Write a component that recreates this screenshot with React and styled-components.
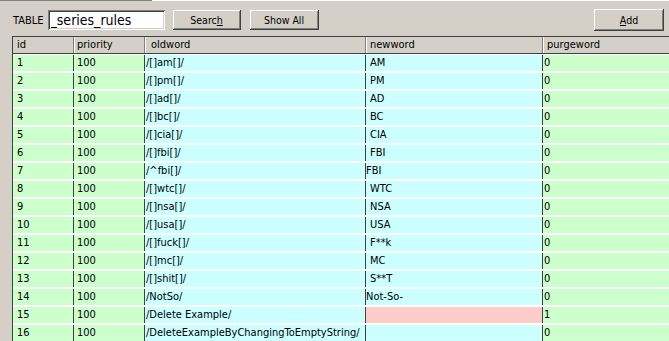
import React from 'react'
import styled, { createGlobalStyle } from 'styled-components'

const GlobalStyle = createGlobalStyle`
  html, body {
    margin: 0;
    padding: 0;
    background: #d4d0c8;
    overflow: hidden;
  }
`

const font = `"DejaVu Sans Condensed", "Liberation Sans", sans-serif`

const columns = [
  { key: 'id', title: 'id', width: '60px', pad: 4, headPad: 4, color: '#ccffcc' },
  { key: 'priority', title: 'priority', width: '71px', pad: 3, headPad: 3, color: '#ccffcc' },
  { key: 'oldword', title: 'oldword', width: '221px', pad: 1, headPad: 6, color: '#ccffff' },
  { key: 'newword', title: 'newword', width: '177px', pad: 4, headPad: 4, color: '#ccffff' },
  { key: 'purgeword', title: 'purgeword', width: '1fr', pad: 1, headPad: 4, color: '#ccffcc' }
]

const rows = [
  ['1', '/[]am[]/', 'AM', '0'],
  ['2', '/[]pm[]/', 'PM', '0'],
  ['3', '/[]ad[]/', 'AD', '0'],
  ['4', '/[]bc[]/', 'BC', '0'],
  ['5', '/[]cia[]/', 'CIA', '0'],
  ['6', '/[]fbi[]/', 'FBI', '0'],
  ['7', '/^fbi[]/', 'FBI', '0', true],
  ['8', '/[]wtc[]/', 'WTC', '0'],
  ['9', '/[]nsa[]/', 'NSA', '0'],
  ['10', '/[]usa[]/', 'USA', '0'],
  ['11', '/[]fuck[]/', 'F**k', '0'],
  ['12', '/[]mc[]/', 'MC', '0'],
  ['13', '/[]shit[]/', 'S**T', '0'],
  ['14', '/NotSo/', 'Not-So-', '0', true],
  ['15', '/Delete Example/', '', '1', false, true],
  ['16', '/DeleteExampleByChangingToEmptyString/', '', '0']
]

const gridTemplate = columns.map(c => c.width).join(' ')

const Page = styled.div`
  display: flex;
  flex-direction: column;
  height: 341px;
  background: #d4d0c8;
  font-family: ${font};
  color: #000;
  overflow: hidden;
`

const TabEdge = styled.div`
  display: flex;
  height: 2px;
`

const TabGap = styled.div`
  width: 152px;
  border-top: 1px solid #808080;
`

const TabLine = styled.div`
  flex: 1;
  border-top: 1px solid #ffffff;
`

const Toolbar = styled.div`
  display: flex;
  align-items: center;
  height: 22px;
  margin-top: 7px;
  padding: 0 5px 0 13px;
`

const Label = styled.span`
  font-size: 11px;
  margin-right: 4px;
`

const TableInput = styled.input`
  box-sizing: border-box;
  width: 117px;
  height: 20px;
  border: none;
  outline: none;
  padding: 0 3px;
  margin: 0 8px 0 0;
  background: #fff;
  font-family: ${font};
  font-size: 14px;
  color: #000;
  box-shadow: inset 1px 1px #808080, inset -1px -1px #ffffff,
    inset 2px 2px #404040, inset -2px -2px #d4d0c8;
`

const Button = styled.button`
  box-sizing: border-box;
  width: ${p => p.$width}px;
  height: ${p => p.$height || 20}px;
  margin-right: ${p => p.$gap || 0}px;
  margin-left: ${p => (p.$push ? 'auto' : '0')};
  padding: 0;
  border: none;
  background: #d4d0c8;
  font-family: ${font};
  font-size: 10.5px;
  color: #000;
  box-shadow: inset -1px -1px #404040, inset 1px 1px #ffffff,
    inset -2px -2px #808080, inset 2px 2px #d4d0c8;
`

const Grid = styled.div`
  flex: 1;
  margin: 5px 0 0 12px;
  border-left: 1px solid #404040;
  display: flex;
  flex-direction: column;
`

const HeaderRow = styled.div`
  display: grid;
  grid-template-columns: ${gridTemplate};
  height: 16px;
  border-top: 1px solid #404040;
  border-bottom: 1px solid #404040;
  background: #d4d0c8;
`

const HeaderCell = styled.div`
  padding-left: ${p => p.$pad}px;
  border-left: ${p => (p.$first ? 'none' : '1px solid #808080')};
  box-shadow: ${p => (p.$first ? 'none' : 'inset 1px 0 #ffffff')};
  font-size: 11px;
  line-height: 16px;
  white-space: nowrap;
  overflow: hidden;
`

const Body = styled.div`
  flex: 1;
  display: flex;
  flex-direction: column;
  gap: 2px;
  padding-top: 1px;
  background: #fff;
`

const Row = styled.div`
  display: grid;
  grid-template-columns: ${gridTemplate};
  height: 16px;
  flex-shrink: 0;
`

const Cell = styled.div`
  background: ${p => p.$bg};
  padding-left: ${p => p.$pad}px;
  border-left: ${p => (p.$first ? 'none' : '1px solid #404040')};
  font-size: 11px;
  line-height: 16px;
  white-space: nowrap;
  overflow: hidden;
`

const App = () => (
  <Page>
    <GlobalStyle />
    <TabEdge>
      <TabGap />
      <TabLine />
    </TabEdge>
    <Toolbar>
      <Label>TABLE</Label>
      <TableInput readOnly value='_series_rules' />
      <Button $width={68} $gap={9}>Searc<u>h</u></Button>
      <Button $width={69}>Show All</Button>
      <Button $width={70} $height={22} $push><u>A</u>dd</Button>
    </Toolbar>
    <Grid>
      <HeaderRow>
        {columns.map((c, i) => (
          <HeaderCell key={c.key} $pad={c.headPad} $first={i === 0}>{c.title}</HeaderCell>
        ))}
      </HeaderRow>
      <Body>
        {rows.map(([id, oldword, newword, purge, tight, missing]) => {
          const values = [id, '100', oldword, newword, purge]
          return (
            <Row key={id}>
              {columns.map((c, i) => {
                const isNew = c.key === 'newword'
                const bg = isNew && missing ? '#ffcccc' : c.color
                const pad = isNew && tight ? 0 : c.pad
                return (
                  <Cell key={c.key} $bg={bg} $pad={pad} $first={i === 0}>{values[i]}</Cell>
                )
              })}
            </Row>
          )
        })}
      </Body>
    </Grid>
  </Page>
)

export default App
